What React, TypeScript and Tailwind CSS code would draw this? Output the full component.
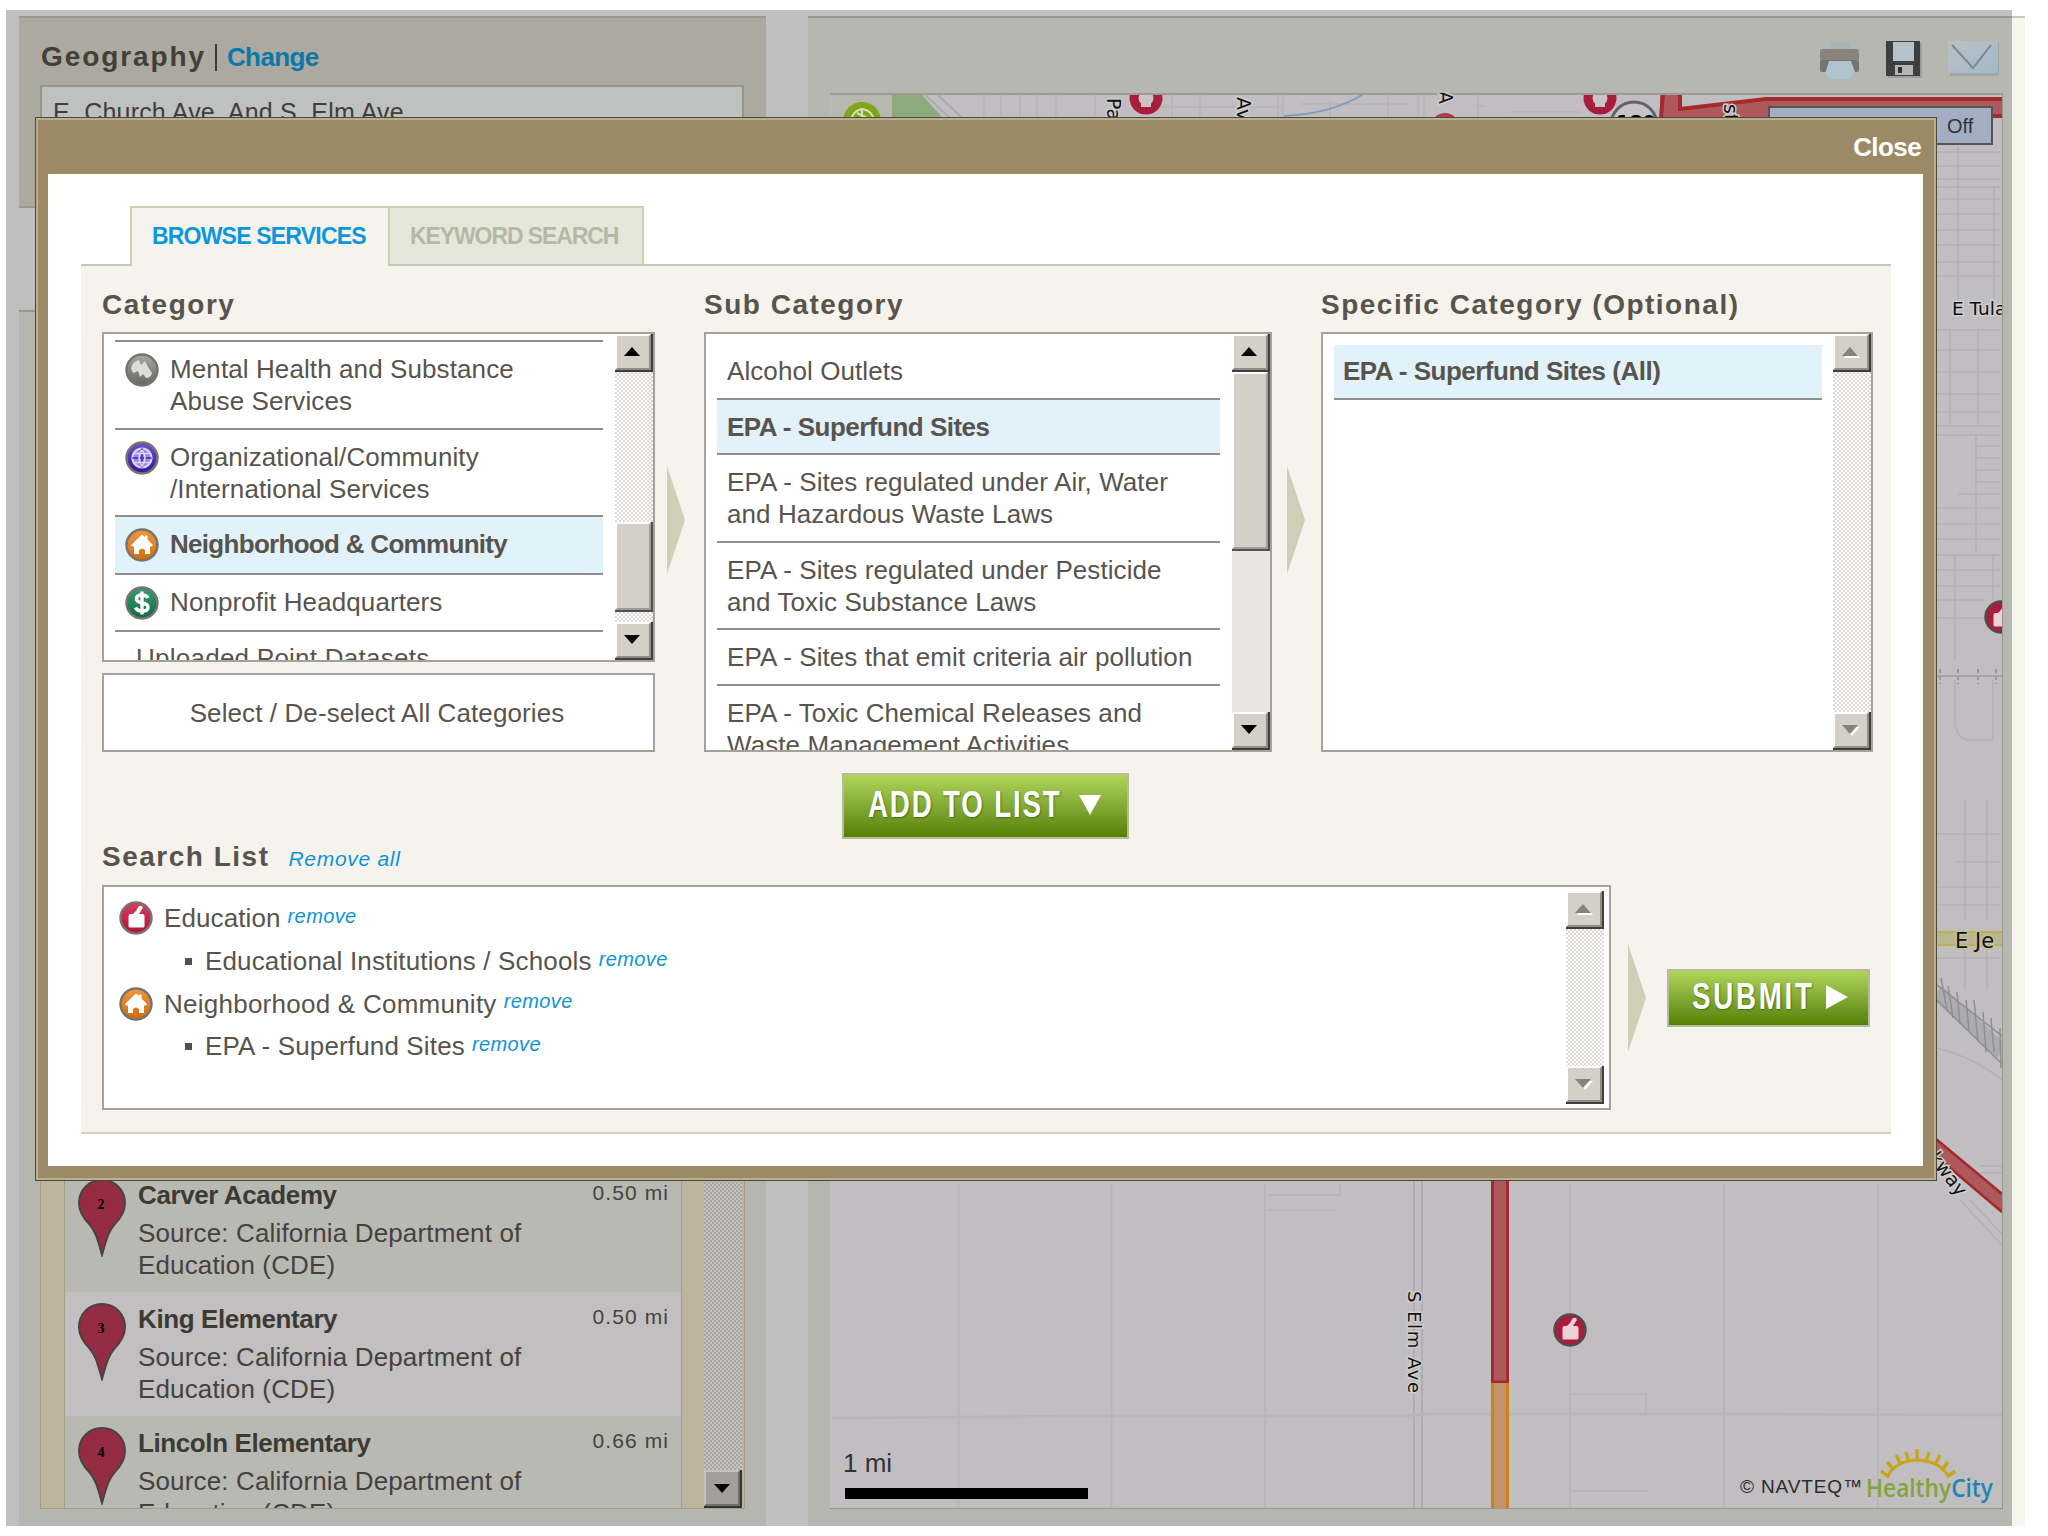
import clsx from "clsx";
import type { ReactNode } from "react";

const results = [
  { id: 2, name: "Carver Academy", distance: "0.50 mi" },
  { id: 3, name: "King Elementary", distance: "0.50 mi" },
  { id: 4, name: "Lincoln Elementary", distance: "0.66 mi" },
];

const subCategories = [
  ["Alcohol Outlets"],
  ["EPA - Superfund Sites"],
  ["EPA - Sites regulated under Air, Water", "and Hazardous Waste Laws"],
  ["EPA - Sites regulated under Pesticide", "and Toxic Substance Laws"],
  ["EPA - Sites that emit criteria air pollution"],
  ["EPA - Toxic Chemical Releases and", "Waste Management Activities"],
];

function ScrollButton({ dir, disabled }: { dir: "up" | "down"; disabled?: boolean }) {
  const points = dir === "up" ? "8,0 16,9 0,9" : "0,0 16,0 8,9";
  return (
    <div className="h-[38px] shrink-0 border-r-2 border-b-2 border-[#403e3c] bg-[#d4d0c8]">
      <div className="flex h-full items-center justify-center border-2 border-t-white border-l-white border-r-[#908c86] border-b-[#908c86]">
        <svg width="18" height="11" viewBox="0 0 18 11">
          {disabled && <polygon points={points} fill="#fff" transform="translate(2 2)" />}
          <polygon points={points} fill={disabled ? "#85827c" : "#000"} />
        </svg>
      </div>
    </div>
  );
}

function Thumb({ className }: { className: string }) {
  return (
    <div className={clsx("shrink-0 border-r-2 border-b-2 border-[#55524e] bg-[#d4d0c8]", className)}>
      <div className="h-full border-2 border-t-white border-l-white border-r-[#a09c96] border-b-[#a09c96]" />
    </div>
  );
}

function ScrollBar({ disabled, plain, children }: { disabled?: boolean; plain?: boolean; children?: ReactNode }) {
  return (
    <div
      className={clsx(
        "flex h-full w-[38px] shrink-0 flex-col",
        plain
          ? "bg-[#eae5e3]"
          : "bg-[repeating-conic-gradient(#dcd8d5_0_25%,#ffffff_0_50%)] bg-[length:4px_4px]"
      )}
    >
      <ScrollButton dir="up" disabled={disabled} />
      <div className="flex-1">{children}</div>
      <ScrollButton dir="down" disabled={disabled} />
    </div>
  );
}

function HandGlyph() {
  return (
    <path
      d="M11 26.500 Q9.500 26.500 9.500 25 V15 Q9.500 13 11.500 13 H14 Q17.500 10 19.500 5.500 Q21.500 4 23.500 5.500 Q24.500 7 22.500 9 L20 13 H23.500 Q25.500 13 25.500 15 V25 Q25.500 26.500 24 26.500 Z"
      fill="#fff"
    />
  );
}

function ServiceIcon({ kind }: { kind: "mental" | "org" | "home" | "nonprofit" | "education" }) {
  const colors = {
    mental: ["#a8a8a6", "#646664"],
    org: ["#6f52cc", "#35159b"],
    home: ["#f5963c", "#cf6c10"],
    nonprofit: ["#3a9d70", "#0d6a42"],
    education: ["#dc3c5c", "#b01032"],
  }[kind];
  return (
    <svg width="34" height="34" viewBox="0 0 34 34" className="shrink-0">
      <defs>
        <linearGradient id={"g-" + kind} x1="0" y1="0" x2="0" y2="1">
          <stop offset="0" stopColor={colors[0]} />
          <stop offset="1" stopColor={colors[1]} />
        </linearGradient>
      </defs>
      <circle cx="17" cy="17" r="15.500" fill={"url(#g-" + kind + ")"} stroke="#77736e" strokeWidth="2.400" />
      {kind === "home" && (
        <path d="M17 6.500 L20 9 V7.500 H22.500 V11.500 L28 17 Q27.500 19 25 18.500 V26 H20 V22 Q17 19 14 22 V26 H9 V18.500 Q6.500 19 6 17 Z" fill="#fff" />
      )}
      {kind === "education" && <HandGlyph />}
      {kind === "org" && (
        <g fill="none" stroke="#ddd6f8" strokeWidth="2.200">
          <circle cx="17" cy="17" r="9.500" fill="#9a88e0" />
          <path d="M7.500 17 H26.500 M17 7.500 V26.500" stroke="#5a3dc0" />
          <path d="M10 12.500 H24 M10 21.500 H24 M17 9 Q11 17 17 25 Q23 17 17 9" strokeWidth="1.500" />
        </g>
      )}
      {kind === "mental" && (
        <path d="M6 15 Q8 8 14 7 L16 12 L20 8 L23 14 L27 20 Q26 25 21 25 L18 21 L15 24 L13 18 L8 20 Z" fill="#dcdcdb" />
      )}
      {kind === "nonprofit" && (
        <path
          d="M23 12 Q21.500 9 17 9 Q11.500 9 11.500 12.800 Q11.500 16 17 17 Q23 18 23 21.200 Q23 25 17 25 Q12 25 10.500 21.500 M17 5.500 V28.500"
          fill="none"
          stroke="#fff"
          strokeWidth="3.400"
        />
      )}
    </svg>
  );
}

function CategoryRow({ icon, lines, selected }: { icon: "mental" | "org" | "home" | "nonprofit"; lines: string[]; selected?: boolean }) {
  return (
    <div
      className={clsx(
        "flex gap-[11px] border-b-2 border-[#8f8f8f] pt-[11px] pb-[10.5px] pl-[10px]",
        selected ? "bg-[#e2f2fa] font-bold tracking-[-0.7px]" : "tracking-[0.1px]"
      )}
    >
      <ServiceIcon kind={icon} />
      <div>
        {lines.map((line) => (
          <p key={line}>{line}</p>
        ))}
      </div>
    </div>
  );
}

function Heading({ children }: { children: ReactNode }) {
  return <h3 className="text-[28px] leading-8 font-bold tracking-[1.5px] whitespace-nowrap">{children}</h3>;
}

function Arrow({ className }: { className?: string }) {
  return (
    <svg width="18" height="108" viewBox="0 0 18 108" className={clsx("shrink-0", className)}>
      <polygon points="0,0 18,54 0,108" fill="#cfcfb8" />
    </svg>
  );
}

function Bullet({ children }: { children: ReactNode }) {
  return (
    <div className="flex items-center pl-[81px]">
      <span className="mr-[13px] size-[7px] bg-[#555148]" />
      <span className="tracking-[0.15px]">{children}</span>
      <RemoveLink />
    </div>
  );
}

function RemoveLink() {
  return <a className="-mt-[5px] ml-[7px] text-[20px] tracking-[0.4px] text-[#0d94d8] italic">remove</a>;
}

function Pin({ label }: { label: number }) {
  return (
    <svg width="48" height="78" viewBox="0 0 48 78" className="shrink-0">
      <path
        d="M24 1 C37 1 47 11 47 24 C47 34 41 41 36 46 C30 53 28 62 24 76 C20 62 18 53 12 46 C7 41 1 34 1 24 C1 11 11 1 24 1 Z"
        fill="#962c42"
        stroke="#4a4145"
        strokeWidth="2"
      />
      <text x="23" y="30" fontSize="14" fontWeight="bold" textAnchor="middle" fontFamily="Liberation Serif, serif" fill="#000">
        {label}
      </text>
    </svg>
  );
}

function SchoolMarker({ x, y }: { x: number; y: number }) {
  return (
    <g transform={`translate(${x - 17} ${y - 17})`}>
      <circle cx="17" cy="17" r="15.500" fill="#a81d3c" stroke="#55484b" strokeWidth="2.400" />
      <g opacity="0.8">
        <HandGlyph />
      </g>
    </g>
  );
}

function Toolbar() {
  return (
    <svg width="182" height="44" viewBox="1820 40 182 44">
      <defs>
        <linearGradient id="envelope" x1="0" y1="0" x2="1" y2="1">
          <stop offset="0" stopColor="#bcc1c1" />
          <stop offset="1" stopColor="#9fb9cc" />
        </linearGradient>
      </defs>
      <path d="M1832 42 H1849 L1853 54 H1827 Z" fill="#aab5b8" />
      <rect x="1820" y="49" width="39" height="12" rx="2" fill="#8d837d" />
      <rect x="1820" y="60" width="39" height="12" rx="2" fill="#737576" />
      <path d="M1829 61 H1851 L1855 72 L1849 79 H1830 L1825 74 Z" fill="#b0c4ce" />
      <rect x="1888" y="43" width="34" height="35" fill="#9d9e99" />
      <rect x="1886" y="41" width="34" height="35" fill="#3c3e40" />
      <rect x="1893" y="42" width="21" height="19" fill="#b3c3c9" />
      <rect x="1895" y="65" width="18" height="10" fill="#b5b6b4" />
      <rect x="1898" y="67" width="4" height="6" fill="#333" />
      <rect x="1950" y="43" width="49" height="33" fill="#a2a6a5" />
      <rect x="1948" y="41" width="50" height="32" fill="url(#envelope)" />
      <path d="M1952 45 L1973 68 L1991 45" fill="none" stroke="#7f868c" strokeWidth="2" />
    </svg>
  );
}

function MapCanvas() {
  const street = "DejaVu Sans, sans-serif";
  return (
    <svg width="1172" height="1415" viewBox="830 93 1172 1415" className="block">
      <rect x="830" y="93" width="1172" height="1415" fill="#c0bec0" />

      {/* street grid */}
      <g stroke="#b8b6b9" strokeWidth="2" fill="none">
        <path d="M958.500 1184 V1508 M1111.500 1184 V1508 M1265 1184 V1508 M1570 1184 V1508 M1724 1184 V1508 M1878 1184 V1508" />
        <path d="M1414 1180 V1508 M1422 1180 V1508" stroke="#b0aeb1" />
        <path d="M832 1418 L1111 1416 H1400 L1430 1414 L1724 1414 L2002 1415" strokeWidth="3" />
        <path d="M1268 1195 H1340 V1184 M1268 1210 H1337 M1570 1394 H1646 V1414 M1570 1491 H1648" />
        <path d="M984 95 V117 M1001 95 V117 M1020 95 V117 M1037 95 V117 M1056 95 V117 M1095 95 V117 M1172 95 V117 M1200 95 V117 M1278 95 V117 M1283 95 V117 M1330 100 V117 M1388 95 V117 M1418 95 V117 M1424 95 V117 M1478 95 V117 M1510 112 H1580 M1475 106 H1485 M1160 107 H1284 M1300 104 H1410" />
      </g>
      <g stroke="#b3b1b4" strokeWidth="1.500" fill="none">
        <path d="M1937 152 H2000 M1937 166 H2000 M1937 179 H2000 M1937 187 H2000 M1937 199 H2000 M1937 214 H2000 M1937 230 H2000 M1937 245 H2000 M1937 262 H2000 M1937 276 H2000 M1937 330 H2000 M1937 350 H2000 M1937 372 H2000 M1937 394 H2000 M1937 412 H2000 M1937 426 H2000 M1937 435 H2000" />
        <path d="M1958 147 V300 M1994 187 V300 M1950 330 V426 M1978 330 V426 M1976 435 V553 M1976 446 H2000 M1976 458 H2000 M1976 470 H2000 M1976 482 H2000 M1958 494 H2000 M1937 508 H2000 M1937 524 H2000 M1937 539 H2000 M1937 555 H2000 M1937 570 H2000 M1937 586 H2000 M1937 600 H1984 M1937 618 H1984" />
        <path d="M1955 555 V660 M1993 555 V600 M1955 680 V722 Q1957 740 1970 740 H1993 V680" />
        <path d="M1965 800 V920 M1987 800 V920 M1937 834 H2000 M1955 862 H2000 M1937 887 H2000 M1937 905 H2000 M1937 958 H2000 M1965 950 V990 M1987 950 V990 M1937 1048 Q1975 1058 2002 1080 M1980 1166 H2002 M1980 1173 H2002 M1960 1200 L2002 1245 M1970 1200 L2002 1234" />
      </g>
      <path d="M1937 676 H2002" stroke="#a5a3a6" strokeWidth="2" />
      <path d="M1940 669 V684 M1958 669 V684 M1978 669 V684 M1996 669 V684" stroke="#979698" strokeWidth="2" strokeDasharray="4 3" />

      {/* rail yard */}
      <path d="M1937 992 L2002 1052" stroke="#acabad" strokeWidth="16" />
      <path
        d="M1937 985 L2002 1036 M1937 1000 L2002 1064 M1941 978 L1947 1010 M1948 986 L1953 1018 M1957 992 L1960 1024 M1966 1000 L1969 1030 M1974 1000 L1978 1042 M1983 1012 L1986 1052 M1991 1018 L1994 1052 M2000 1028 L2001 1068"
        stroke="#8f8e90"
        strokeWidth="1.500"
        fill="none"
      />

      {/* park, locator and creek */}
      <rect x="831" y="95" width="61" height="23" fill="#b9b8b0" />
      <circle cx="862" cy="121" r="19" fill="#7da61c" />
      <path d="M852 117 Q855 110 862 109 Q870 110 873 117 M862 109 V118 M857 113 L867 118" stroke="#d7e2c0" strokeWidth="2" fill="none" />
      <polygon points="892,95 922,95 943,118 892,118" fill="#8caa7c" />
      <path d="M925 95 L950 118 M938 95 L962 118" stroke="#acabad" strokeWidth="2" />
      <path d="M1284 116 Q1330 114 1362 95" stroke="#7e9dbd" strokeWidth="2" fill="none" />

      {/* highways */}
      <polygon points="1660,95 1682,95 1682,108 1766,98 2002,98 2002,117 1660,117" fill="#b0595c" />
      <path d="M1663 95 L1661 117 M1680 95 V109 L1766 99 H2002 M1990 116 H2002" stroke="#a32a2d" strokeWidth="4" fill="none" />
      <polygon points="1937,1140 2002,1193 2002,1213 1937,1158" fill="#b0595c" />
      <path d="M1930 1134 L2002 1194 M1930 1151 L2002 1212" stroke="#a32a2d" strokeWidth="2.500" />
      <rect x="1491" y="1180" width="18" height="202" fill="#b0595c" />
      <path d="M1492.500 1180 V1382 H1507.500 V1180" stroke="#a02a31" strokeWidth="3" fill="none" />
      <rect x="1491" y="1383" width="18" height="125" fill="#c2946c" />
      <path d="M1492.500 1383 V1508 M1507.500 1383 V1508" stroke="#cc8418" strokeWidth="3" />
      <rect x="1937" y="931" width="65" height="15" fill="#bcb68e" />
      <path d="M1937 932 H2002 M1937 945 H2002" stroke="#bdb13c" strokeWidth="1.500" />

      <circle cx="1634" cy="125" r="23" fill="#c6c4c6" stroke="#646266" strokeWidth="3" />
      <text x="1616" y="129" fontSize="19" fontWeight="bold" fontFamily={street}>180</text>
      <circle cx="1146" cy="98" r="12" fill="#c9c3c5" stroke="#a81d3c" strokeWidth="9" />
      <circle cx="1600" cy="98" r="12" fill="#c9c3c5" stroke="#a81d3c" strokeWidth="9" />
      <rect x="1141" y="94" width="10" height="13" fill="#c9c3c5" />
      <rect x="1595" y="94" width="10" height="13" fill="#c9c3c5" />
      <rect x="830" y="93" width="1172" height="2" fill="#9c9c94" />
      <circle cx="1445" cy="127" r="14" fill="#a5404f" />

      <g fontFamily={street} fontSize="19" fill="#111" stroke="#cfcdcf" strokeWidth="3" paintOrder="stroke">
        <text transform="translate(1107 98) rotate(90)">Pa</text>
        <text transform="translate(1237 97) rotate(90)">Av</text>
        <text transform="translate(1439 91) rotate(90)">A</text>
        <text transform="translate(1724 104) rotate(90)">st</text>
        <text x="1952" y="315" fontSize="18.500">E Tula</text>
        <text x="1955" y="948" fontSize="21" stroke="#c4bf9c">E Je</text>
        <text transform="translate(1408 1291) rotate(90)" fontSize="18" textLength="102">S Elm Ave</text>
        <text transform="translate(1928 1158) rotate(53)" fontSize="19">kway</text>
      </g>

      <rect x="1769" y="107" width="223" height="37" fill="#a3aec3" stroke="#555557" strokeWidth="2" />
      <text x="1947" y="133" fontSize="20" fontFamily="Liberation Sans, sans-serif" fill="#333">Off</text>

      <SchoolMarker x={2001} y={617} />
      <SchoolMarker x={1570} y={1330} />

      <text x="843" y="1472" fontSize="26" fontFamily="Liberation Sans, sans-serif" fill="#333">1 mi</text>
      <rect x="845" y="1488" width="243" height="11" fill="#000" />

      <text x="1740" y="1493" fontSize="19" textLength="122" fontFamily="Liberation Sans, sans-serif" fill="#2b2b2b">© NAVTEQ™</text>
      <path d="M1887 1477 Q1895 1461 1917 1460 Q1940 1461 1949 1477" fill="none" stroke="#c7a51c" strokeWidth="3" />
      <path
        d="M1889 1477 L1881 1471 M1894 1470 L1887 1462 M1901 1465 L1896 1455 M1909 1462 L1906 1452 M1917 1461 V1449 M1926 1462 L1929 1452 M1935 1465 L1940 1455 M1942 1470 L1948 1462 M1947 1477 L1955 1471"
        stroke="#c7a51c"
        strokeWidth="3.500"
      />
      <text x="1866" y="1497" fontSize="25" fontWeight="600" textLength="127" lengthAdjust="spacingAndGlyphs" fontFamily="Open Sans, sans-serif">
        <tspan fill="#84a33c">Healthy</tspan>
        <tspan fill="#1f84b4">City</tspan>
      </text>
    </svg>
  );
}

function Sidebar() {
  return (
    <div className="flex w-[747px] shrink-0 flex-col gap-[102px]">
      <div className="h-[192px] border-y-2 border-[#97978d] bg-[#acaaa0] px-[21px] pt-[23px]">
        <div className="flex h-8 items-center whitespace-nowrap text-[#433f38]">
          <h2 className="ml-px text-[28px] leading-8 font-bold tracking-[1.900px]">Geography</h2>
          <span className="ml-[9px] h-[27px] w-[2px] bg-[#403d36]" />
          <a className="ml-[10px] text-[26px] leading-8 font-bold tracking-[-0.6px] text-[#0a78ab]">Change</a>
        </div>
        <div className="mt-[12px] h-[60px] w-[704px] border-2 border-[#96968a] bg-[#bfc1c0] pt-[9px] pl-[11px] text-[25px] leading-8 tracking-[0.2px] text-[#403d3a]">
          E. Church Ave. And S. Elm Ave.
        </div>
      </div>

      <div className="flex flex-1 flex-col justify-end border-t-2 border-[#97978d] bg-[#b6b6b0] px-[21px] pb-[17px]">
        <div className="flex h-[342px] border border-[#a19f87] bg-[#bcb49c]">
          <div className="ml-[23px] h-full w-[618px] overflow-hidden border-x border-[#a19f87]">
            {results.map((r) => (
              <div key={r.id} className={clsx("flex h-[124px] pl-[13px]", r.id % 2 ? "bg-[#c1bfc0]" : "bg-[#b9b9b4]")}>
                <div className="pt-[11px]">
                  <Pin label={r.id} />
                </div>
                <div className="flex-1 pl-[12px]">
                  <div className="flex justify-between pt-[11px] pr-3">
                    <h4 className="font-bold tracking-[-0.4px] text-[#3c3b33]">{r.name}</h4>
                    <span className="-mt-[2px] text-[21px] tracking-[1.1px]">{r.distance}</span>
                  </div>
                  <p className="mt-[6px] tracking-[0.15px]">
                    Source: California Department of
                    <br />
                    Education (CDE)
                  </p>
                </div>
              </div>
            ))}
          </div>
          <div className="ml-[22px] flex w-[38px] flex-col justify-end bg-[repeating-conic-gradient(#aaa7a5_0_25%,#c4c2c0_0_50%)] bg-[length:4px_4px]">
            <div className="h-[38px] border-r-2 border-b-2 border-[#333] bg-[#a3a09b]">
              <div className="flex h-full items-center justify-center border-2 border-t-[#c4c4c4] border-l-[#c4c4c4] border-r-[#706e6a] border-b-[#706e6a]">
                <svg width="16" height="9" viewBox="0 0 16 9">
                  <polygon points="0,0 16,0 8,9" />
                </svg>
              </div>
            </div>
          </div>
        </div>
      </div>
    </div>
  );
}

function ServicesDialog() {
  return (
    <div className="absolute top-[117px] left-[35px] h-[1064px] w-[1902px] border border-[#4d493c] text-[26px] leading-8 text-[#58544d]">
      <div className="flex h-full flex-col border-2 border-[#b9ae8e] bg-[#9c8a66] pr-[11px] pb-[12px] pl-[10px]">
        <div className="flex h-[54px] shrink-0 justify-end pt-[11px] pr-[2px] font-bold tracking-[-0.6px] text-white">Close</div>
        <div className="flex-1 bg-white pt-8 pr-8 pl-[33px]">
          <div className="flex h-[58px] pl-[49px] text-[23px] font-bold whitespace-nowrap">
            <div className="relative z-10 h-[60px] w-[258px] border-t-2 border-l-2 border-[#cfcfb2] bg-[#f5f3ec] pt-[12px] pl-[20px] tracking-[-0.8px] text-[#0a98dc]">
              BROWSE SERVICES
            </div>
            <div className="h-[58px] w-[256px] border-2 border-b-0 border-[#cfcfb2] bg-[#e5e7d9] pt-[12px] pl-[20px] tracking-[-1.1px] text-[#b6b8a7]">
              KEYWORD SEARCH
            </div>
          </div>

          <div className="h-[870px] border-t-2 border-b-2 border-t-[#c5c6b8] border-b-[#cfd0b6] bg-[#f5f3ec] pt-[23px] pl-[21px]">
            <div className="flex h-[463px]">
              <div className="w-[553px]">
                <Heading>Category</Heading>
                <div className="mt-[11px] flex h-[330px] overflow-hidden border-2 border-[#a5a29b] bg-white">
                  <div className="mr-[12px] ml-[11px] h-full w-[488px] pt-[6px]">
                    <div className="border-t-2 border-[#8f8f8f]">
                      <CategoryRow icon="mental" lines={["Mental Health and Substance", "Abuse Services"]} />
                      <CategoryRow icon="org" lines={["Organizational/Community", "/International Services"]} />
                      <CategoryRow icon="home" lines={["Neighborhood & Community"]} selected />
                      <CategoryRow icon="nonprofit" lines={["Nonprofit Headquarters"]} />
                      <p className="pt-[10px] pl-[21px] tracking-[0.25px]">Uploaded Point Datasets</p>
                    </div>
                  </div>
                  <ScrollBar>
                    <div className="h-[150px]" />
                    <Thumb className="h-[90px]" />
                  </ScrollBar>
                </div>
                <div className="mt-[11px] flex h-[79px] items-center justify-center border-2 border-[#a5a29b] bg-white pr-[3px] tracking-[0.1px]">
                  Select / De-select All Categories
                </div>
              </div>

              <Arrow className="mt-[177px] mr-[19px] ml-3" />

              <div className="w-[568px]">
                <Heading>Sub Category</Heading>
                <div className="mt-[11px] flex h-[420px] justify-between overflow-hidden border-2 border-[#a5a29b] bg-white">
                  <div className="ml-[11px] w-[503px] pt-[10px]">
                    {subCategories.map((lines, i) => (
                      <div
                        key={lines[0]}
                        className={clsx(
                          "border-b-2 border-[#8f8f8f] pt-[11px] pb-[10.5px] pl-[10px] whitespace-nowrap",
                          i === 1 ? "bg-[#e2f1fa] font-bold tracking-[-0.5px]" : "tracking-[0.08px]"
                        )}
                      >
                        {lines.map((line) => (
                          <p key={line}>{line}</p>
                        ))}
                      </div>
                    ))}
                  </div>
                  <ScrollBar plain>
                    <Thumb className="h-[179px]" />
                  </ScrollBar>
                </div>
              </div>

              <Arrow className="mt-[177px] mr-4 ml-[15px]" />

              <div className="w-[552px]">
                <Heading>Specific Category (Optional)</Heading>
                <div className="mt-[11px] flex h-[420px] justify-between border-2 border-[#a5a29b] bg-white">
                  <div className="ml-[11px] w-[488px] pt-[11px]">
                    <div className="border-b-2 border-[#8f8f8f] bg-[#e2f2fa] pt-[10px] pb-[11px] pl-[9px] font-bold tracking-[-0.5px]">
                      EPA - Superfund Sites (All)
                    </div>
                  </div>
                  <ScrollBar disabled />
                </div>
              </div>
            </div>

            <button className="mt-[21px] ml-[740px] flex h-[66px] w-[287px] items-center border-2 border-[#b4b9a0] bg-linear-to-b from-[#b0d659] to-[#578000] pb-[3px] pl-6 text-white">
              <span className="w-[211px] origin-left scale-x-75 text-left text-[37px] leading-none font-bold tracking-[2.4px] whitespace-nowrap [text-shadow:1px_1px_2px_#4a6a10]">
                ADD TO LIST
              </span>
              <svg width="22" height="20" viewBox="0 0 22 20">
                <polygon points="0,0 22,0 11,20" fill="#fff" />
              </svg>
            </button>

            <div className="mt-[2px] flex items-baseline">
              <Heading>Search List</Heading>
              <a className="ml-[19px] text-[21px] tracking-[0.7px] text-[#0d94d8] italic">Remove all</a>
            </div>
            <div className="mt-[10px] flex">
              <div className="flex h-[225px] w-[1509px] justify-between border-2 border-[#a5a29b] bg-white py-[4px] pr-[5px]">
                <div className="grid auto-rows-[42.700px] content-start pt-[6px]">
                  <div className="flex items-center pl-[15px]">
                    <ServiceIcon kind="education" />
                    <span className="ml-[11px] tracking-[0.1px]">Education</span>
                    <RemoveLink />
                  </div>
                  <Bullet>Educational Institutions / Schools</Bullet>
                  <div className="flex items-center pl-[15px]">
                    <ServiceIcon kind="home" />
                    <span className="ml-[11px] tracking-[0.25px]">Neighborhood &amp; Community</span>
                    <RemoveLink />
                  </div>
                  <Bullet>EPA - Superfund Sites</Bullet>
                </div>
                <ScrollBar disabled />
              </div>
              <Arrow className="mt-[59px] mr-[21px] ml-[17px]" />
              <button className="mt-[84px] flex h-[58px] w-[203px] items-center border-2 border-[#b4b9a0] bg-linear-to-b from-[#b0d659] to-[#578000] pb-[3px] pl-[23px] text-white">
                <span className="w-[134px] origin-left scale-x-75 text-left text-[37px] leading-none font-bold tracking-[3.600px] [text-shadow:1px_1px_2px_#4a6a10]">
                  SUBMIT
                </span>
                <svg width="22" height="24" viewBox="0 0 22 24">
                  <polygon points="0,0 22,12 0,24" fill="#fff" />
                </svg>
              </button>
            </div>
          </div>
        </div>
      </div>
    </div>
  );
}

export default function App() {
  return (
    <div className="relative h-[1536px] w-[2048px] overflow-hidden bg-white pt-[10px] pl-[6px] font-['Liberation_Sans',Arial,sans-serif] text-[26px] leading-8 text-[#44423f]">
      <div className="flex">
        <div className="flex h-[1516px] w-[2006px] justify-between bg-[#bfbfbf] pt-[6px] pl-[13px]">
          <Sidebar />
          <div className="w-[1204px] border-t-2 border-[#97978d] bg-[#b6b7b0] pl-[22px]">
            <div className="flex h-[75px] w-[1172px] justify-end pt-[22px]">
              <Toolbar />
            </div>
            <div className="w-[1173px] border-r border-b border-[#96968e]">
              <MapCanvas />
            </div>
          </div>
        </div>
        <div className="mt-[6px] w-[13px] border-t-2 border-[#c9c9bf] bg-[#f6f6ee]" />
      </div>
      <ServicesDialog />
    </div>
  );
}
